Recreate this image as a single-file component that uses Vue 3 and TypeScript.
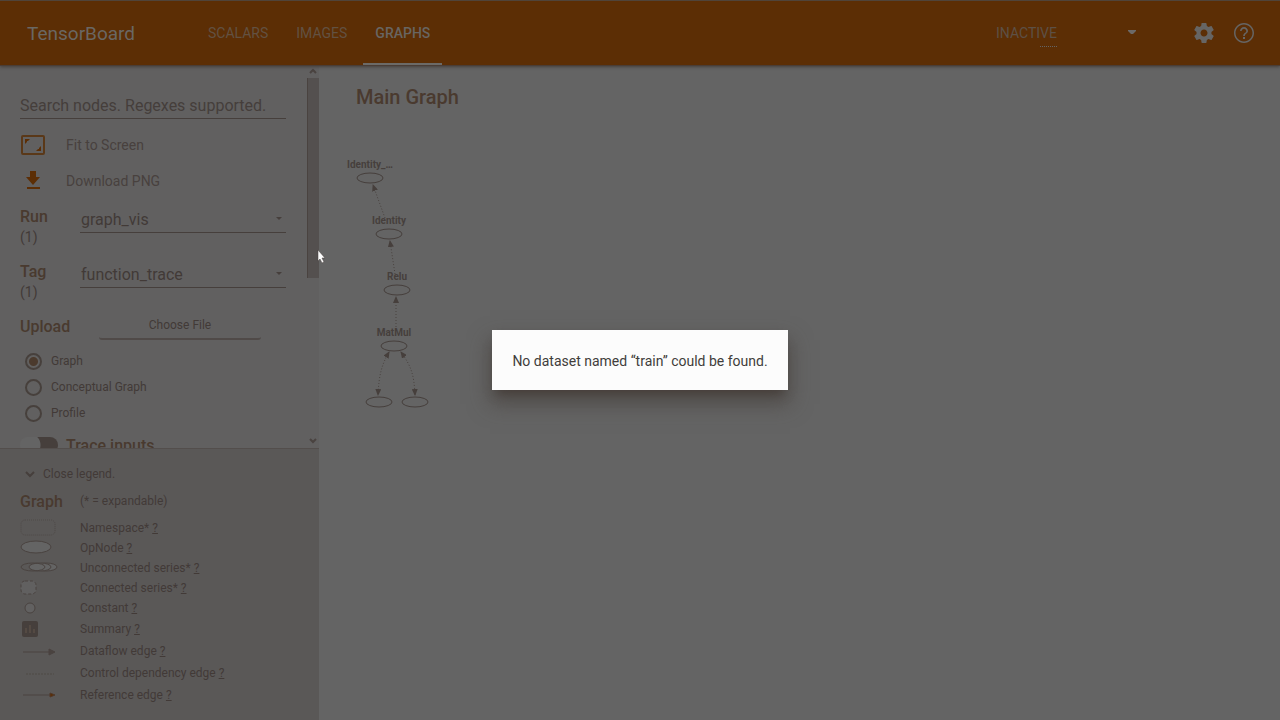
<script setup lang="ts">
import { ref } from 'vue'

const tabs = ['SCALARS', 'IMAGES', 'GRAPHS']
const activeTab = ref('GRAPHS')
const modes = ['Graph', 'Conceptual Graph', 'Profile']
const mode = ref('Graph')
const query = ref('')

interface LegendItem { icon: string; label: string; tall?: boolean }
const legend: LegendItem[] = [
  { icon: 'namespace', label: 'Namespace*' },
  { icon: 'op', label: 'OpNode' },
  { icon: 'unconnected', label: 'Unconnected series*' },
  { icon: 'connected', label: 'Connected series*' },
  { icon: 'constant', label: 'Constant' },
  { icon: 'summary', label: 'Summary', tall: true },
  { icon: 'dataflow', label: 'Dataflow edge', tall: true },
  { icon: 'control', label: 'Control dependency edge', tall: true },
  { icon: 'reference', label: 'Reference edge', tall: true },
]

const nodes = [
  { x: 51, y: 58, label: 'Identity_…' },
  { x: 70, y: 114, label: 'Identity' },
  { x: 78, y: 170, label: 'Relu' },
  { x: 75, y: 226, label: 'MatMul' },
  { x: 60, y: 282, label: '' },
  { x: 96, y: 282, label: '' },
]
const edges = [
  'M66 98 L54 65',
  'M76 154 L71 121',
  'M77 210 L77 177',
  'M70 232 C62 246 60 256 59 275',
  'M82 232 C92 246 95 254 96 275',
]
</script>

<template>
  <div class="app">
    <header class="toolbar">
      <div class="brand">TensorBoard</div>
      <nav class="tabs">
        <button v-for="t in tabs" :key="t" type="button" class="tab" :class="{ active: t === activeTab }" @click="activeTab = t">{{ t }}</button>
      </nav>
      <div class="inactive">
        <select aria-label="Inactive dashboards"><option>INACTIVE</option></select>
        <svg class="inactive-arrow" width="8" height="5" viewBox="0 0 8 5"><path d="M0 0h8v1L5 4H3L0 1z" fill="#6c6967" /></svg>
      </div>
      <button type="button" class="icon-btn" aria-label="Settings">
        <svg width="24" height="24" viewBox="0 0 24 24"><path fill="#666564" d="M19.43 12.98c.04-.32.07-.64.07-.98s-.03-.66-.07-.98l2.11-1.65c.19-.15.24-.42.12-.64l-2-3.46c-.12-.22-.39-.3-.61-.22l-2.49 1c-.52-.4-1.08-.73-1.69-.98l-.38-2.65A.49.49 0 0 0 14 2h-4c-.25 0-.46.18-.49.42l-.38 2.65c-.61.25-1.17.59-1.69.98l-2.49-1c-.23-.09-.49 0-.61.22l-2 3.46c-.13.22-.07.49.12.64l2.11 1.65c-.04.32-.07.65-.07.98s.03.66.07.98l-2.11 1.65c-.19.15-.24.42-.12.64l2 3.46c.12.22.39.3.61.22l2.49-1c.52.4 1.08.73 1.69.98l.38 2.65c.03.24.24.42.49.42h4c.25 0 .46-.18.49-.42l.38-2.65c.61-.25 1.17-.59 1.69-.98l2.49 1c.23.09.49 0 .61-.22l2-3.46c.12-.22.07-.49-.12-.64l-2.11-1.65zM12 15.5c-1.930 0-3.500-1.570-3.500-3.500s1.570-3.500 3.500-3.500 3.500 1.570 3.500 3.500-1.570 3.500-3.500 3.500z" /></svg>
      </button>
      <button type="button" class="icon-btn" aria-label="Help">
        <svg width="24" height="24" viewBox="0 0 24 24"><path fill="#666564" d="M11 18h2v-2h-2v2zm1-16C6.480 2 2 6.480 2 12s4.480 10 10 10 10-4.480 10-10S17.520 2 12 2zm0 18.500c-4.700 0-8.500-3.800-8.500-8.500s3.800-8.500 8.500-8.500 8.500 3.800 8.500 8.500-3.800 8.500-8.500 8.500zm0-14.500c-2.210 0-4 1.790-4 4h1.700c0-1.200 1-2.300 2.300-2.300s2.300 1 2.300 2.300c0 2-3.100 1.900-3.100 5h1.700c0-2.300 3.100-2.500 3.100-5 0-2.210-1.790-4-4-4z" /></svg>
      </button>
    </header>

    <div class="body">
      <aside class="side">
        <section class="controls">
          <div class="controls-body">
            <input v-model="query" class="search" type="text" aria-label="Search nodes" placeholder="Search nodes. Regexes supported." />
            <button type="button" class="action">
              <svg width="26" height="22" viewBox="0 0 26 22">
                <rect x="2" y="2" width="22" height="18" rx="1" fill="none" stroke="#5a3818" stroke-width="2" />
                <path d="M5 10V5h5l-2 2H7v1zM21 12v5h-5l2-2h1v-1z" fill="#5c2e05" />
              </svg>
              <span>Fit to Screen</span>
            </button>
            <button type="button" class="action">
              <svg width="26" height="22" viewBox="0 0 26 22"><path d="M10 1h6v6h4l-7 8-7-8h4zM7 17h13v2H7z" fill="#5c2e05" /></svg>
              <span>Download PNG</span>
            </button>
            <div class="field">
              <label for="run"><b>Run</b><small>(1)</small></label>
              <div class="select-wrap">
                <select id="run"><option>graph_vis</option></select>
                <svg class="caret" width="6" height="4" viewBox="0 0 6 4"><path d="M0 0h6L3 3z" fill="#463f3c" /></svg>
              </div>
            </div>
            <div class="field">
              <label for="tag"><b>Tag</b><small>(1)</small></label>
              <div class="select-wrap">
                <select id="tag"><option>function_trace</option></select>
                <svg class="caret" width="6" height="4" viewBox="0 0 6 4"><path d="M0 0h6L3 3z" fill="#463f3c" /></svg>
              </div>
            </div>
            <div class="upload">
              <b id="upload">Upload</b>
              <button type="button" aria-describedby="upload">Choose File</button>
            </div>
            <label v-for="m in modes" :key="m" class="radio">
              <input v-model="mode" type="radio" name="mode" :value="m" /><span>{{ m }}</span>
            </label>
            <label class="toggle"><input type="checkbox" /><b>Trace inputs</b></label>
          </div>
          <div class="scrollbar" aria-hidden="true">
            <svg width="12" height="12" viewBox="0 0 12 12"><path d="M3 7l3-3 3 3" fill="none" stroke="#4a4340" stroke-width="2" /></svg>
            <div class="thumb"></div>
            <svg width="12" height="16" viewBox="0 0 12 16"><path d="M3 7l3 3 3-3" fill="none" stroke="#4a4340" stroke-width="2" /></svg>
          </div>
        </section>

        <section class="legend">
          <button type="button" class="close-legend">
            <svg width="12" height="8" viewBox="0 0 12 8"><path d="M2 2l4 4 4-4" fill="none" stroke="#463f3c" stroke-width="2" /></svg>
            <span>Close legend.</span>
          </button>
          <div class="legend-head"><b>Graph</b><span>(* = expandable)</span></div>
          <ul>
            <li v-for="item in legend" :key="item.icon" :class="{ tall: item.tall }">
              <svg width="40" height="18" viewBox="0 0 40 18" fill="none" stroke="#4a4340">
                <rect v-if="item.icon === 'namespace'" x="1" y="1" width="34" height="15" rx="4" stroke="#4f4a48" stroke-dasharray="1 1" />
                <ellipse v-else-if="item.icon === 'op'" cx="16" cy="8" rx="15" ry="6" fill="#646464" />
                <g v-else-if="item.icon === 'unconnected'" fill="#646464">
                  <ellipse cx="26" cy="8" rx="11" ry="4" /><ellipse cx="20" cy="8" rx="11" ry="4" /><ellipse cx="13" cy="8" rx="12" ry="4" fill="none" />
                </g>
                <rect v-else-if="item.icon === 'connected'" x="1" y="2" width="15" height="13" rx="4" fill="#616060" stroke-dasharray="3 2" />
                <circle v-else-if="item.icon === 'constant'" cx="10" cy="9" r="5" fill="#626161" />
                <g v-else-if="item.icon === 'summary'">
                  <rect x="2" y="1" width="16" height="16" rx="2" fill="#463f3c" stroke="none" />
                  <path d="M6 13V8M10 13V5M14 13v-4" stroke="#63564a" />
                </g>
                <g v-else-if="item.icon === 'dataflow'"><path d="M3 10h31" /><path d="M29 7l6 3-6 3z" fill="#4a4340" /></g>
                <path v-else-if="item.icon === 'control'" d="M6 10h28" stroke="#4f4a47" stroke-dasharray="2 1" />
                <g v-else><path d="M3 9h31" /><path d="M30 7l5 2-5 2z" fill="#5c2e05" stroke="#50392a" /></g>
              </svg>
              <span>{{ item.label }} <a href="#" :aria-label="'About ' + item.label">?</a></span>
            </li>
          </ul>
        </section>
      </aside>

      <main class="canvas">
        <h1>Main Graph</h1>
        <svg class="graph" role="img" aria-label="Main graph">
          <defs>
            <marker id="tip" markerWidth="8" markerHeight="6" refX="6" refY="3" orient="auto-start-reverse" markerUnits="userSpaceOnUse"><path d="M0 0l7 3-7 3z" fill="#463f3c" /></marker>
          </defs>
          <path v-for="(e, i) in edges" :key="e" class="edge" :d="e" marker-end="url(#tip)" :marker-start="i > 2 ? 'url(#tip)' : undefined" />
          <g v-for="(n, i) in nodes" :key="i">
            <ellipse :cx="n.x" :cy="n.y" rx="13" ry="5" />
            <text v-if="n.label" :x="n.x" :y="n.y - 10" text-anchor="middle">{{ n.label }}</text>
          </g>
        </svg>
      </main>
    </div>

    <div class="overlay">
      <div class="dialog" role="alertdialog" aria-modal="true">No dataset named “train” could be found.</div>
    </div>
    <svg class="pointer" width="8" height="14" viewBox="0 0 8 14"><path d="M1 0v11l2-2 2 4 2-1-2-4h3z" fill="#fcfcfc" stroke="#463f3c" stroke-width="0.5" /></svg>
  </div>
</template>

<style>
body { margin: 0; background: #646464; }
</style>

<style scoped>
* { box-sizing: border-box; }
.app { position: relative; height: 100vh; display: flex; flex-direction: column; overflow: hidden; background: #646464; color: #423a37; font-family: Roboto, "Liberation Sans", sans-serif; font-size: 14px; }
button, select, input { font: inherit; color: inherit; background: none; border: 0; border-radius: 0; padding: 0; margin: 0; appearance: none; outline: 0; }
svg { flex: none; }
.toolbar { flex: none; position: relative; height: 66px; display: flex; align-items: center; padding-right: 24px; background: #5c2e05; border-top: 1px solid #50443a; border-bottom: 1px solid #4a3d36; box-shadow: 0 1px 3px #463f3c; }
.brand { width: 196px; padding-left: 27px; font-size: 19px; color: #6a6763; }
.tabs { display: flex; align-self: stretch; gap: 4px; flex: 1; }
.tab { padding: 2px 12px 0; color: #625142; border-bottom: 2px solid transparent; }
.tab.active { color: #686562; border-color: #6c6a67; font-weight: 500; }
.inactive { position: relative; width: 144px; margin-right: 52px; }
.inactive select { width: 100%; height: 26px; color: #5d5045; }
.inactive::after { content: ""; position: absolute; left: 44px; top: 26px; width: 17px; border-bottom: 1px dotted #646464; }
.inactive-arrow { position: absolute; right: 4px; top: 10px; }
.icon-btn { width: 24px; height: 24px; }
.icon-btn + .icon-btn { margin-left: 16px; }
.body { flex: 1; min-height: 0; display: flex; }
.side { width: 319px; flex: none; display: flex; flex-direction: column; background: #616060; }
.controls { flex: 1; min-height: 0; display: flex; overflow: hidden; }
.controls-body { flex: 1; padding: 26px 21px 0 20px; }
.search { display: block; width: 100%; height: 27px; margin-bottom: 8px; border-bottom: 1px solid #463f3c; font-size: 16px; }
.search::placeholder { color: #453e3b; opacity: 1; }
.action { display: flex; align-items: center; gap: 20px; width: 100%; height: 36px; text-align: left; color: #48413e; }
.field { display: flex; height: 55px; }
.field label { width: 60px; padding-top: 8px; }
b { font-size: 16px; font-weight: 500; color: #493a2f; }
.field b, .field small { display: block; line-height: 20px; }
.field small { font-size: 14px; }
.select-wrap { position: relative; flex: 1; }
.select-wrap select { display: block; width: 100%; height: 34px; padding: 7px 0 0 1px; border-bottom: 1px solid #463f3c; font-size: 16px; }
.caret { position: absolute; right: 4px; top: 18px; }
.upload { display: flex; align-items: center; height: 39px; padding-bottom: 4px; }
.upload b { width: 79px; }
.upload button { width: 162px; height: 26px; padding-bottom: 2px; font-size: 12px; border-bottom: 2px solid #504a48; border-radius: 3px; }
.radio { display: flex; align-items: center; height: 26px; gap: 9px; font-size: 12px; }
.radio input { width: 17px; height: 17px; margin-left: 5px; border: 2px solid #47403c; border-radius: 50%; }
.radio input:checked { background: radial-gradient(circle, #4b3a2d 4px, transparent 5px); }
.toggle { display: flex; align-items: center; height: 38px; }
.toggle b { margin-left: 8px; }
.toggle input { width: 38px; height: 16px; border-radius: 8px; background: radial-gradient(circle at 9px 8px, #646464 11px, #463f3c 12px); }
.scrollbar { width: 12px; flex: none; display: flex; flex-direction: column; }
.thumb { height: 200px; margin-bottom: auto; background: #54504f; border-left: 1px solid #4a4340; }
.legend { flex: none; height: 272px; padding: 16px 20px 0; background: #5a5857; border-top: 1px solid #534e4c; font-size: 12px; }
.close-legend { display: flex; align-items: center; gap: 7px; height: 18px; padding-left: 4px; }
.legend-head { display: flex; align-items: center; height: 35px; padding-top: 1px; }
.legend-head b { width: 60px; }
ul { list-style: none; margin: 0; padding: 0; }
li { display: flex; align-items: center; gap: 20px; height: 20px; }
li.tall { height: 22px; }
a { color: inherit; text-decoration: underline; }
.canvas { flex: 1; min-width: 0; display: flex; flex-direction: column; }
h1 { margin: 0; height: 54px; padding: 18px 0 0 37px; font-size: 20px; line-height: 26px; font-weight: 500; color: #4a3a2f; }
.graph { flex: 1; width: 100%; }
.graph ellipse { fill: #646464; stroke: #463f3c; }
.graph text { font-size: 10px; font-weight: 700; fill: #463f3c; }
.edge { fill: none; stroke: #49423f; stroke-dasharray: 1 2; }
.overlay { position: absolute; inset: 0; display: flex; align-items: center; justify-content: center; }
.dialog { padding: 21px 20px 19px; line-height: 20px; background: #fcfcfc; color: #413d3b; box-shadow: 0 8px 10px -5px #453d39, 0 12px 20px 2px rgba(69, 61, 57, 0.6); }
.pointer { position: absolute; left: 317px; top: 250px; }
</style>
